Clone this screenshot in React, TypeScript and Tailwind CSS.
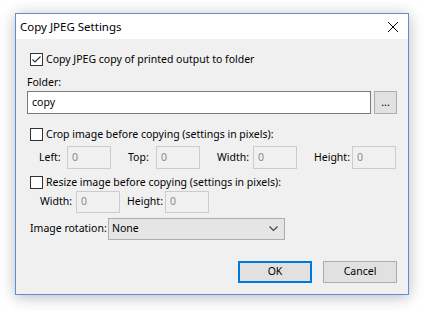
import React from "react";

const font = { fontFamily: '"Noto Sans", Lato, sans-serif' };

function Check({ checked, label }: { checked?: boolean; label: string }) {
  return (
    <div className="flex items-center h-[13px]">
      <div className="w-[13px] h-[13px] border border-[#333333] bg-white flex items-center justify-center shrink-0">
        {checked && (
          <svg width="11" height="11" viewBox="0 0 11 11">
            <path d="M1.5 5.5 L4 8 L9.5 2.5" stroke="#333" strokeWidth="1.2" fill="none" />
          </svg>
        )}
      </div>
      <span className="ml-[3px] text-[10.5px] leading-[13px] text-black whitespace-nowrap">{label}</span>
    </div>
  );
}

function Field({ label, labelW, w = 44, h = 23 }: { label: string; labelW: number; w?: number; h?: number }) {
  return (
    <div className="flex items-center shrink-0">
      <span className="text-[10.5px] text-black whitespace-nowrap" style={{ width: labelW }}>
        {label}
      </span>
      <div
        className="border border-[#cccccc] bg-[#f0f0f0] text-[10.5px] text-[#8a8a8a] pl-[4px] flex items-center"
        style={{ width: w, height: h }}
      >
        0
      </div>
    </div>
  );
}

export default function App() {
  return (
    <div className="w-[425px] h-[312px] bg-white pt-[13px] pl-[15px]" style={font}>
      <div className="w-[394px] h-[282px] border border-[#5b8fd8] flex flex-col shadow-[0_2px_14px_rgba(0,0,0,0.28)]">
        <div className="h-[25px] bg-white flex items-center justify-between pl-[4px] pr-[10px] shrink-0">
          <span className="text-[11.5px] text-black">Copy JPEG Settings</span>
          <svg width="10" height="10" viewBox="0 0 10 10">
            <path d="M0 0 L10 10 M10 0 L0 10" stroke="#000" strokeWidth="1" />
          </svg>
        </div>
        <div className="flex-1 bg-[#f0f0f0] flex flex-col pl-[11px] pr-[11px]">
          <div className="mt-[14px] pl-[3px]">
            <Check checked label="Copy JPEG copy of printed output to folder" />
          </div>
          <div className="mt-[9px] text-[10.5px] leading-[15px] text-black">Folder:</div>
          <div className="mt-[1px] flex items-center gap-[3px]">
            <div className="w-[345px] h-[23px] border border-[#7a7a7a] bg-white text-[10.5px] text-black pl-[4px] flex items-center">
              copy
            </div>
            <div className="w-[23px] h-[23px] border border-[#adadad] bg-[#e1e1e1] text-[10.5px] text-black flex items-center justify-center">
              ...
            </div>
          </div>
          <div className="mt-[14px] pl-[3px]">
            <Check label="Crop image before copying (settings in pixels):" />
          </div>
          <div className="mt-[5px] flex items-center pl-[12px] gap-[17px]">
            <Field label="Left:" labelW={28} />
            <Field label="Top:" labelW={28} />
            <Field label="Width:" labelW={36} />
            <Field label="Height:" labelW={38} />
          </div>
          <div className="mt-[7px] pl-[3px]">
            <Check label="Resize image before copying (settings in pixels):" />
          </div>
          <div className="mt-[2px] flex items-center pl-[13px] gap-[7px]">
            <Field label="Width:" labelW={36} h={22} />
            <Field label="Height:" labelW={38} h={22} />
          </div>
          <div className="mt-[5px] flex items-center pl-[3px]">
            <span className="text-[10.5px] text-black w-[78px] whitespace-nowrap">Image rotation:</span>
            <div className="w-[177px] h-[22px] border border-[#adadad] bg-[#e5e5e5] flex items-center justify-between pl-[3px] pr-[6px] text-[10.5px] text-black">
              <span>None</span>
              <svg width="9" height="6" viewBox="0 0 9 6">
                <path d="M0.5 0.5 L4.5 4.5 L8.5 0.5" stroke="#444" strokeWidth="1.2" fill="none" />
              </svg>
            </div>
          </div>
          <div className="mt-[21px] flex justify-end gap-[11px]">
            <div className="w-[74px] h-[22px] border-2 border-[#0078d7] bg-[#e1e1e1] text-[10.5px] text-black flex items-center justify-center">
              OK
            </div>
            <div className="w-[74px] h-[22px] border border-[#adadad] bg-[#e1e1e1] text-[10.5px] text-black flex items-center justify-center">
              Cancel
            </div>
          </div>
        </div>
      </div>
    </div>
  );
}
